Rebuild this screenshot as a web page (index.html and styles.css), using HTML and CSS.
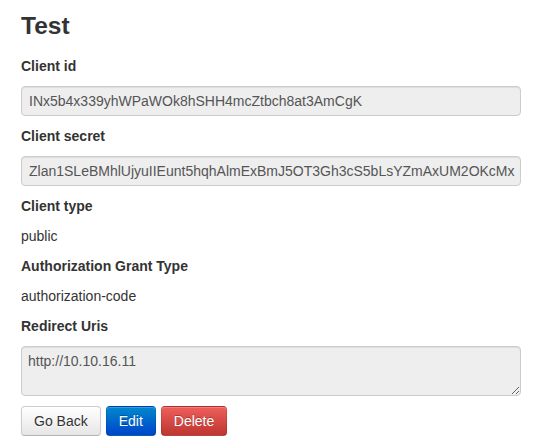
FILE: index.html
```html
<!DOCTYPE html>
<html>
<head>
<meta charset="utf-8">
<link rel="stylesheet" href="styles.css">
</head>
<body>
<div class="page">
  <h3 class="title">Test</h3>
  <div class="field">
    <div class="label">Client id</div>
    <input class="control" type="text" readonly value="INx5b4x339yhWPaWOk8hSHH4mcZtbch8at3AmCgK">
  </div>
  <div class="field">
    <div class="label">Client secret</div>
    <input class="control" type="text" readonly value="Zlan1SLeBMhlUjyuIIEunt5hqhAlmExBmJ5OT3Gh3cS5bLsYZmAxUM2OKcMx">
  </div>
  <div class="field">
    <div class="label">Client type</div>
    <div class="value">public</div>
  </div>
  <div class="field">
    <div class="label">Authorization Grant Type</div>
    <div class="value">authorization-code</div>
  </div>
  <div class="field">
    <div class="label">Redirect Uris</div>
    <textarea class="control area" readonly>http://10.10.16.11</textarea>
  </div>
  <div class="actions">
    <button class="btn">Go Back</button>
    <button class="btn btn-primary">Edit</button>
    <button class="btn btn-danger">Delete</button>
  </div>
</div>
</body>
</html>
```
FILE: styles.css
```css
html, body {
  margin: 0;
  padding: 0;
  background: #fff;
}
body {
  font-family: "Liberation Sans", Arial, sans-serif;
  font-size: 14px;
  line-height: 20px;
  color: #333;
}
.page {
  padding: 0 21px;
  width: 500px;
}
.title {
  margin: 6px 0 10px;
  font-size: 24.5px;
  line-height: 40px;
  font-weight: bold;
  color: #333;
}
.field {
  display: flex;
  flex-direction: column;
  gap: 10px;
  margin-bottom: 10px;
}
.label {
  font-weight: bold;
  line-height: 20px;
}
.value {
  line-height: 20px;
}
.control {
  box-sizing: border-box;
  width: 500px;
  height: 30px;
  margin: 0;
  padding: 4px 2px 4px 7px;
  font-family: "Liberation Sans", Arial, sans-serif;
  font-size: 14px;
  line-height: 20px;
  color: #555;
  background: #eee;
  border: 1px solid #ccc;
  border-radius: 4px;
  box-shadow: inset 0 1px 1px rgba(0,0,0,0.075);
  outline: none;
}
.area {
  height: 50px;
  padding: 4px 6px;
  resize: vertical;
  display: block;
}
.actions {
  display: flex;
  gap: 5px;
}
.btn {
  font-family: "Liberation Sans", Arial, sans-serif;
  font-size: 14px;
  line-height: 20px;
  height: 30px;
  padding: 4px 12px;
  color: #333;
  text-shadow: 0 1px 1px rgba(255,255,255,0.75);
  background: linear-gradient(to bottom, #ffffff, #e6e6e6);
  border: 1px solid #ccc;
  border-bottom-color: #b3b3b3;
  border-radius: 4px;
  box-shadow: inset 0 1px 0 rgba(255,255,255,0.2), 0 1px 2px rgba(0,0,0,0.05);
  cursor: pointer;
}
.btn-primary {
  color: #fff;
  text-shadow: 0 -1px 0 rgba(0,0,0,0.25);
  background: linear-gradient(to bottom, #0088cc, #0044cc);
  border-color: rgba(0,0,0,0.1) rgba(0,0,0,0.1) rgba(0,0,0,0.25);
}
.btn-danger {
  color: #fff;
  text-shadow: 0 -1px 0 rgba(0,0,0,0.25);
  background: linear-gradient(to bottom, #ee5f5b, #bd362f);
  border-color: rgba(0,0,0,0.1) rgba(0,0,0,0.1) rgba(0,0,0,0.25);
}
```
